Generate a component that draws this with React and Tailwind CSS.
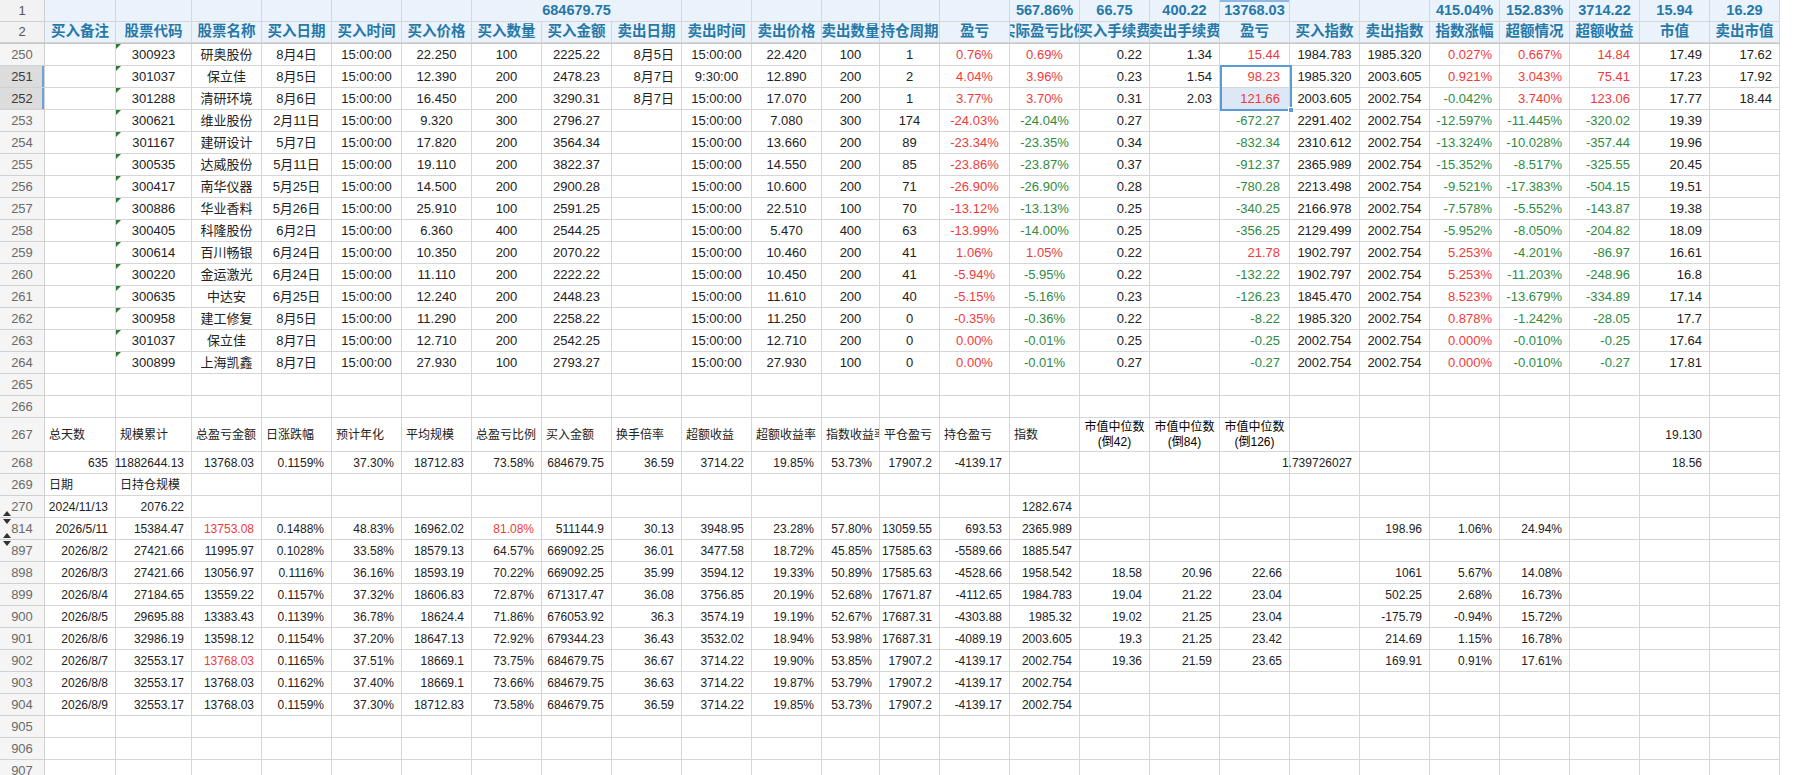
import React from 'react';

const GRID = "grid grid-cols-[45px_71px_76px_repeat(9,70px)_58px_60px_repeat(12,70px)]";
const RED = "text-[#f03a3a]";
const GREEN = "text-[#2f8a3f]";
const CELL = "flex items-center h-full border-r border-b border-[#d6d6d6] overflow-hidden whitespace-nowrap";
const AL = { l: "justify-start pl-[4px]", c: "justify-center", r: "justify-end pr-[7px]" };

const headers = ['买入备注', '股票代码', '股票名称', '买入日期', '买入时间', '买入价格', '买入数量', '买入金额', '卖出日期', '卖出时间', '卖出价格', '卖出数量', '持仓周期', '盈亏', '实际盈亏比例', '买入手续费', '卖出手续费', '盈亏', '买入指数', '卖出指数', '指数涨幅', '超额情况', '超额收益', '市值', '卖出市值'];

const topAlign = ['l', 'c', 'c', 'c', 'c', 'c', 'c', 'c', 'r', 'c', 'c', 'c', 'c', 'c', 'c', 'r', 'r', 'r', 'c', 'c', 'r', 'r', 'r', 'r', 'r'];

const trades = [
  [250, '', '300923', '研奥股份', '8月4日', '15:00:00', '22.250', '100', '2225.22', '8月5日', '15:00:00', '22.420', '100', '1', '0.76%', '0.69%', '0.22', '1.34', '15.44', '1984.783', '1985.320', '0.027%', '0.667%', '14.84', '17.49', '17.62'],
  [251, '', '301037', '保立佳', '8月5日', '15:00:00', '12.390', '200', '2478.23', '8月7日', '9:30:00', '12.890', '200', '2', '4.04%', '3.96%', '0.23', '1.54', '98.23', '1985.320', '2003.605', '0.921%', '3.043%', '75.41', '17.23', '17.92'],
  [252, '', '301288', '清研环境', '8月6日', '15:00:00', '16.450', '200', '3290.31', '8月7日', '15:00:00', '17.070', '200', '1', '3.77%', '3.70%', '0.31', '2.03', '121.66', '2003.605', '2002.754', '-0.042%', '3.740%', '123.06', '17.77', '18.44'],
  [253, '', '300621', '维业股份', '2月11日', '15:00:00', '9.320', '300', '2796.27', '', '15:00:00', '7.080', '300', '174', '-24.03%', '-24.04%', '0.27', '', '-672.27', '2291.402', '2002.754', '-12.597%', '-11.445%', '-320.02', '19.39', ''],
  [254, '', '301167', '建研设计', '5月7日', '15:00:00', '17.820', '200', '3564.34', '', '15:00:00', '13.660', '200', '89', '-23.34%', '-23.35%', '0.34', '', '-832.34', '2310.612', '2002.754', '-13.324%', '-10.028%', '-357.44', '19.96', ''],
  [255, '', '300535', '达威股份', '5月11日', '15:00:00', '19.110', '200', '3822.37', '', '15:00:00', '14.550', '200', '85', '-23.86%', '-23.87%', '0.37', '', '-912.37', '2365.989', '2002.754', '-15.352%', '-8.517%', '-325.55', '20.45', ''],
  [256, '', '300417', '南华仪器', '5月25日', '15:00:00', '14.500', '200', '2900.28', '', '15:00:00', '10.600', '200', '71', '-26.90%', '-26.90%', '0.28', '', '-780.28', '2213.498', '2002.754', '-9.521%', '-17.383%', '-504.15', '19.51', ''],
  [257, '', '300886', '华业香料', '5月26日', '15:00:00', '25.910', '100', '2591.25', '', '15:00:00', '22.510', '100', '70', '-13.12%', '-13.13%', '0.25', '', '-340.25', '2166.978', '2002.754', '-7.578%', '-5.552%', '-143.87', '19.38', ''],
  [258, '', '300405', '科隆股份', '6月2日', '15:00:00', '6.360', '400', '2544.25', '', '15:00:00', '5.470', '400', '63', '-13.99%', '-14.00%', '0.25', '', '-356.25', '2129.499', '2002.754', '-5.952%', '-8.050%', '-204.82', '18.09', ''],
  [259, '', '300614', '百川畅银', '6月24日', '15:00:00', '10.350', '200', '2070.22', '', '15:00:00', '10.460', '200', '41', '1.06%', '1.05%', '0.22', '', '21.78', '1902.797', '2002.754', '5.253%', '-4.201%', '-86.97', '16.61', ''],
  [260, '', '300220', '金运激光', '6月24日', '15:00:00', '11.110', '200', '2222.22', '', '15:00:00', '10.450', '200', '41', '-5.94%', '-5.95%', '0.22', '', '-132.22', '1902.797', '2002.754', '5.253%', '-11.203%', '-248.96', '16.8', ''],
  [261, '', '300635', '中达安', '6月25日', '15:00:00', '12.240', '200', '2448.23', '', '15:00:00', '11.610', '200', '40', '-5.15%', '-5.16%', '0.23', '', '-126.23', '1845.470', '2002.754', '8.523%', '-13.679%', '-334.89', '17.14', ''],
  [262, '', '300958', '建工修复', '8月5日', '15:00:00', '11.290', '200', '2258.22', '', '15:00:00', '11.250', '200', '0', '-0.35%', '-0.36%', '0.22', '', '-8.22', '1985.320', '2002.754', '0.878%', '-1.242%', '-28.05', '17.7', ''],
  [263, '', '301037', '保立佳', '8月7日', '15:00:00', '12.710', '200', '2542.25', '', '15:00:00', '12.710', '200', '0', '0.00%', '-0.01%', '0.25', '', '-0.25', '2002.754', '2002.754', '0.000%', '-0.010%', '-0.25', '17.64', ''],
  [264, '', '300899', '上海凯鑫', '8月7日', '15:00:00', '27.930', '100', '2793.27', '', '15:00:00', '27.930', '100', '0', '0.00%', '-0.01%', '0.27', '', '-0.27', '2002.754', '2002.754', '0.000%', '-0.010%', '-0.27', '17.81', ''],
];

const E = (n) => Array(n).fill('');

const stats = [
  { n: 265, cells: E(25) },
  { n: 266, cells: E(25) },
  { n: 267, tall: true, cells: ['总天数', '规模累计', '总盈亏金额', '日涨跌幅', '预计年化', '平均规模', '总盈亏比例', '买入金额', '换手倍率', '超额收益', '超额收益率', '指数收益率', '平仓盈亏', '持仓盈亏', '指数', ['市值中位数', '(倒42)'], ['市值中位数', '(倒84)'], ['市值中位数', '(倒126)'], '', '', '', '', '', '19.130', ''] },
  { n: 268, cells: ['635', '11882644.13', '13768.03', '0.1159%', '37.30%', '18712.83', '73.58%', '684679.75', '36.59', '3714.22', '19.85%', '53.73%', '17907.2', '-4139.17', '', '', '', '', '1.739726027', '', '', '', '', '18.56', ''] },
  { n: 269, cells: ['日期', '日持仓规模', ...E(23)] },
  { n: 270, up: true, cells: ['2024/11/13', '2076.22', ...E(12), '1282.674', ...E(10)] },
  { n: 814, up: true, down: true, cells: ['2026/5/11', '15384.47', '!13753.08', '0.1488%', '48.83%', '16962.02', '!81.08%', '511144.9', '30.13', '3948.95', '23.28%', '57.80%', '13059.55', '693.53', '2365.989', '', '', '', '', '198.96', '1.06%', '24.94%', '', '', ''] },
  { n: 897, down: true, cells: ['2026/8/2', '27421.66', '11995.97', '0.1028%', '33.58%', '18579.13', '64.57%', '669092.25', '36.01', '3477.58', '18.72%', '45.85%', '17585.63', '-5589.66', '1885.547', ...E(10)] },
  { n: 898, cells: ['2026/8/3', '27421.66', '13056.97', '0.1116%', '36.16%', '18593.19', '70.22%', '669092.25', '35.99', '3594.12', '19.33%', '50.89%', '17585.63', '-4528.66', '1958.542', '18.58', '20.96', '22.66', '', '1061', '5.67%', '14.08%', '', '', ''] },
  { n: 899, cells: ['2026/8/4', '27184.65', '13559.22', '0.1157%', '37.32%', '18606.83', '72.87%', '671317.47', '36.08', '3756.85', '20.19%', '52.68%', '17671.87', '-4112.65', '1984.783', '19.04', '21.22', '23.04', '', '502.25', '2.68%', '16.73%', '', '', ''] },
  { n: 900, cells: ['2026/8/5', '29695.88', '13383.43', '0.1139%', '36.78%', '18624.4', '71.86%', '676053.92', '36.3', '3574.19', '19.19%', '52.67%', '17687.31', '-4303.88', '1985.32', '19.02', '21.25', '23.04', '', '-175.79', '-0.94%', '15.72%', '', '', ''] },
  { n: 901, cells: ['2026/8/6', '32986.19', '13598.12', '0.1154%', '37.20%', '18647.13', '72.92%', '679344.23', '36.43', '3532.02', '18.94%', '53.98%', '17687.31', '-4089.19', '2003.605', '19.3', '21.25', '23.42', '', '214.69', '1.15%', '16.78%', '', '', ''] },
  { n: 902, cells: ['2026/8/7', '32553.17', '!13768.03', '0.1165%', '37.51%', '18669.1', '73.75%', '684679.75', '36.67', '3714.22', '19.90%', '53.85%', '17907.2', '-4139.17', '2002.754', '19.36', '21.59', '23.65', '', '169.91', '0.91%', '17.61%', '', '', ''] },
  { n: 903, cells: ['2026/8/8', '32553.17', '13768.03', '0.1162%', '37.40%', '18669.1', '73.66%', '684679.75', '36.63', '3714.22', '19.87%', '53.79%', '17907.2', '-4139.17', '2002.754', ...E(10)] },
  { n: 904, cells: ['2026/8/9', '32553.17', '13768.03', '0.1159%', '37.30%', '18712.83', '73.58%', '684679.75', '36.59', '3714.22', '19.85%', '53.73%', '17907.2', '-4139.17', '2002.754', ...E(10)] },
  { n: 905, cells: E(25) },
  { n: 906, cells: E(25) },
  { n: 907, cells: E(25) },
];

function RowNum({ n, active, up, down, top }) {
  return (
    <div className={`relative flex items-center justify-center h-full border-r border-b border-[#d0d0d0] text-[13px] ${active ? 'bg-[#dcdcdc] text-[#3a3a3a] shadow-[inset_-2px_0_0_#6aa3da]' : top ? 'bg-[#f2f2f2] text-[#555]' : 'bg-[#f5f5f5] text-[#6a6a6a]'}`}>
      {down && <span className="absolute left-[3px] top-[1px] w-0 h-0 border-l-[4px] border-r-[4px] border-t-[5px] border-l-transparent border-r-transparent border-t-[#333]" />}
      {up && <span className="absolute left-[3px] bottom-[1px] w-0 h-0 border-l-[4px] border-r-[4px] border-b-[5px] border-l-transparent border-r-transparent border-b-[#333]" />}
      {n}
    </div>
  );
}

function tone(i, v) {
  if (!v) return '';
  if (i === 13) return RED;
  if ([14, 17, 20, 21, 22].includes(i)) return v.startsWith('-') ? GREEN : RED;
  return 'text-[#222]';
}

function TopRow({ r }) {
  const [n, ...cells] = r;
  return (
    <div className={`${GRID} h-[22px] text-[13px]`}>
      <RowNum n={n} active={n === 251 || n === 252} />
      {cells.map((v, i) => (
        <div key={i} className={`${CELL} relative ${AL[topAlign[i]]} ${tone(i, v)} ${i === 17 && n === 252 ? 'bg-[#dce8f6]' : ''} ${i === 22 || i === 17 ? 'pr-[9px]' : ''}`}>
          {i === 1 && <span className="absolute left-0 top-0 w-0 h-0 border-t-[5px] border-r-[5px] border-t-[#2d7a36] border-r-transparent" />}
          {v}
        </div>
      ))}
    </div>
  );
}

function StatCell({ v }) {
  if (Array.isArray(v)) {
    return (
      <div className={`${CELL} flex-col justify-center text-center leading-[15px]`}>
        <span>{v[0]}</span>
        <span>{v[1]}</span>
      </div>
    );
  }
  const red = v.startsWith('!');
  const text = red ? v.slice(1) : v;
  const num = /^[-\d!]/.test(v);
  return (
    <div className={`${CELL} ${num ? AL.r : AL.l} ${red ? RED : 'text-[#222]'} ${text === '1.739726027' ? 'overflow-visible' : ''}`}>
      {text}
    </div>
  );
}

function App() {
  const row1 = [
    null, null, null, null, null, null,
    { v: '684679.75', span: true },
    null, null, null, null, null,
    { v: '567.86%' }, { v: '66.75' }, { v: '400.22' }, { v: '13768.03', mark: true },
    null, null,
    { v: '415.04%' }, { v: '152.83%' }, { v: '3714.22' }, { v: '15.94' }, { v: '16.29' },
  ];

  return (
    <div className="w-full h-[775px] overflow-hidden bg-white font-['Liberation_Sans','Noto_Sans_CJK_SC',sans-serif]">
      <div className="w-[1780px]">
        {/* frozen header rows */}
        <div className={`${GRID} h-[22px]`}>
          <RowNum n={1} top />
          {row1.map((c, i) => (
            <div
              key={i}
              className={`${CELL} justify-center bg-[#eaf2fb] text-[14.5px] font-bold text-[#2678a8] ${c?.span ? 'col-span-3' : ''} ${c?.mark ? 'shadow-[inset_0_2px_0_#8bb9e3]' : ''}`}
            >
              {c?.v}
            </div>
          ))}
        </div>
        <div className={`${GRID} h-[19px]`}>
          <RowNum n={2} top />
          {headers.map((h, i) => (
            <div key={i} className={`${CELL} justify-center bg-[#eaf2fb] text-[14.5px] font-bold text-[#2678a8]`}>
              {h}
            </div>
          ))}
        </div>
        <div className="h-[3px] bg-[#c6c6c6]" />

        {/* trade rows */}
        <div className="relative">
          {trades.map((r) => (
            <TopRow key={r[0]} r={r} />
          ))}
          <div className="absolute left-[1220px] top-[21px] w-[72px] h-[46px] border-2 border-[#5b9bd5] pointer-events-none">
            <div className="absolute right-[-4px] bottom-[-4px] w-[6px] h-[6px] bg-[#5b9bd5] border border-white" />
          </div>
        </div>

        {/* summary rows */}
        {stats.map((s) => (
          <div key={s.n} className={`${GRID} ${s.tall ? 'h-[34px]' : 'h-[22px]'} text-[12px]`}>
            <RowNum n={s.n} up={s.up} down={s.down} />
            {s.cells.map((v, i) => (
              <StatCell key={i} v={v} />
            ))}
          </div>
        ))}
      </div>
    </div>
  );
}

export default App;
